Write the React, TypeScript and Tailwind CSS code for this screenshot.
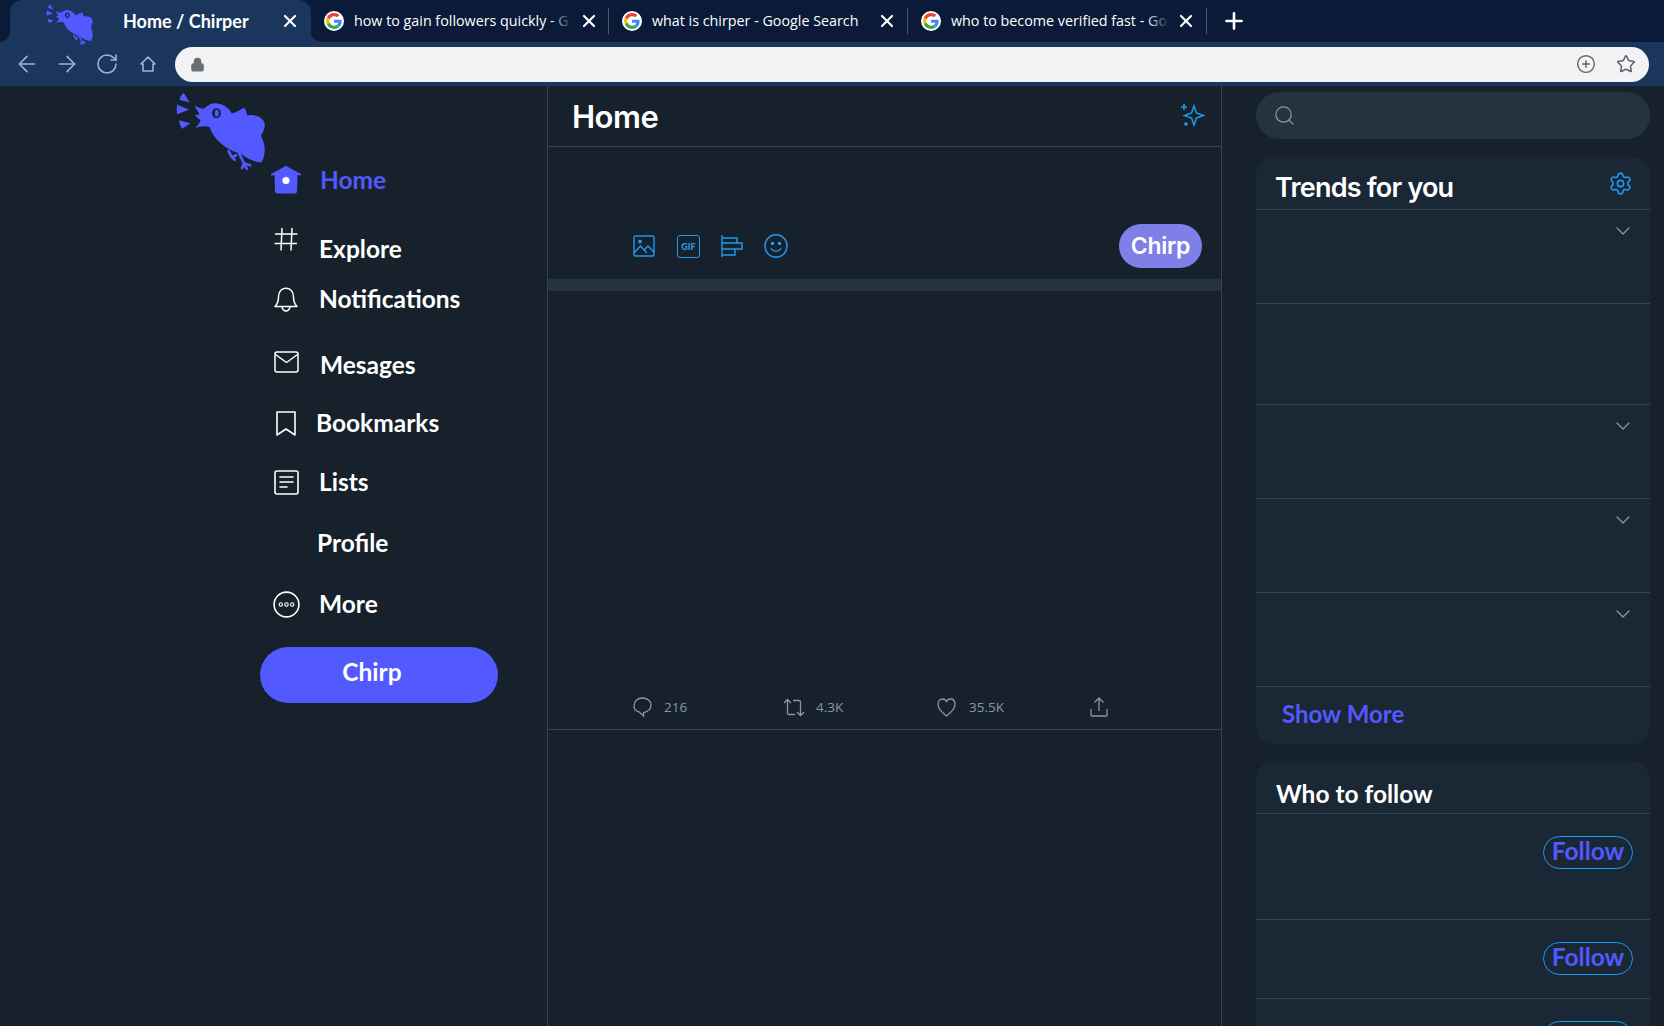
import { ArrowLeft, ArrowRight, ChevronDown, CirclePlus, Lock, Plus, RotateCw, Search, Settings, Star, X } from 'lucide-react';
import type { ReactNode } from 'react';

const navTextClass = "font-['Lato',sans-serif] font-bold text-[24.5px] leading-8 text-white whitespace-nowrap";

function BirdLogo({ className }: { className: string }) {
  return (
    <svg className={className} viewBox="48 22 270 232" fill="#5159ff">
      <path d="M70 24 L89 53 L58 45 Q60 32 70 24Z" />
      <path d="M51 59 L86 75 L51 88 Q48 73 51 59Z" />
      <path d="M57 106 L91 115 L66 131 Q57 120 57 106Z" />
      <path d="M103 62 C113 68 122 71 131 72 C142 60 155 54 170 56 C190 58 205 70 214 86 C228 82 240 74 251 68 C256 76 258 84 260 92 C280 88 298 94 307 106 C316 118 312 134 300 152 C310 170 314 190 310 210 C308 220 304 228 300 232 C280 230 258 220 240 206 C218 200 196 188 180 174 C164 160 154 144 147 126 C132 122 118 124 104 131 C112 122 118 114 121 106 C114 102 108 96 104 90 L118 90 C112 80 107 71 103 62Z" />
      <path d="M204 198 L214 216 M214 216 L226 210 M214 216 L222 224" fill="none" stroke="#5159ff" strokeWidth="8" strokeLinecap="round" />
      <path d="M236 206 L250 234 M250 234 L244 248 M250 234 L258 250 M250 234 L268 240" fill="none" stroke="#5159ff" strokeWidth="8" strokeLinecap="round" />
      <ellipse cx="168" cy="85" rx="13" ry="15" fill="#16212c" />
      <ellipse cx="169" cy="85" rx="6" ry="10" fill="#5159ff" />
    </svg>
  );
}

function GoogleG() {
  return (
    <span className="flex h-[20px] w-[20px] shrink-0 items-center justify-center rounded-full bg-white">
      <svg className="h-[16px] w-[16px]" viewBox="0 0 48 48">
        <path fill="#EA4335" d="M24 9.5c3.5 0 6.7 1.2 9.2 3.6l6.9-6.9C35.9 2.4 30.5 0 24 0 14.6 0 6.5 5.4 2.6 13.2l8 6.2C12.5 13.7 17.8 9.5 24 9.5z" />
        <path fill="#4285F4" d="M46.9 24.5c0-1.6-.1-3.1-.4-4.5H24v9h12.9c-.6 3-2.2 5.5-4.7 7.2l7.7 6c4.5-4.2 7-10.3 7-17.7z" />
        <path fill="#FBBC05" d="M10.5 28.6c-.5-1.4-.8-3-.8-4.6s.3-3.2.8-4.6l-8-6.2C.9 16.5 0 20.1 0 24s.9 7.5 2.6 10.8l7.9-6.2z" />
        <path fill="#34A853" d="M24 48c6.5 0 11.9-2.1 15.9-5.8l-7.7-6c-2.2 1.4-4.9 2.3-8.2 2.3-6.2 0-11.5-4.2-13.4-9.9l-8 6.2C6.5 42.6 14.6 48 24 48z" />
      </svg>
    </span>
  );
}

function Tab({ title, fade, widthClass }: { title: string; fade: boolean; widthClass: string }) {
  return (
    <div className={`flex h-[26px] shrink-0 items-center border-r border-[#4a5a70] pl-[13px] ${widthClass}`}>
      <GoogleG />
      <div className="relative ml-[10px] w-[218px] overflow-hidden">
        <span className="block whitespace-nowrap font-['Open_Sans',sans-serif] text-[14.3px] leading-5 text-white">{title}</span>
        {fade && <span className="absolute inset-y-0 right-0 w-[22px] bg-gradient-to-r from-transparent to-[#0a1a38]" />}
      </div>
      <X className="ml-[7px] h-[20px] w-[20px] text-white" strokeWidth={2.6} />
    </div>
  );
}

function HomeOutline() {
  return (
    <svg className="ml-[21px] h-[16px] w-[16px]" viewBox="0 0 16 16" fill="none" stroke="#a4b3c7" strokeWidth="1.6" strokeLinejoin="round">
      <path d="M1 8 L8 1 L15 8 H13 V15 H3 V8Z" />
    </svg>
  );
}

function BrowserChrome() {
  return (
    <div className="shrink-0">
      <div className="flex h-[42px] items-center bg-[#0a1a38] pl-[10px]">
        <div className="relative flex h-[42px] w-[301px] shrink-0 items-center rounded-t-[12px] bg-[#1a365d] pl-[113px]">
          <span className="absolute bottom-0 left-[-10px] h-[10px] w-[10px] bg-[#1a365d]">
            <span className="block h-full w-full rounded-br-[10px] bg-[#0a1a38]" />
          </span>
          <span className="absolute bottom-0 right-[-10px] h-[10px] w-[10px] bg-[#1a365d]">
            <span className="block h-full w-full rounded-bl-[10px] bg-[#0a1a38]" />
          </span>
          <BirdLogo className="absolute left-[35px] top-[4px] h-[41px] w-[50px]" />
          <span className="w-[157px] whitespace-nowrap font-['Lato',sans-serif] text-[18px] font-bold leading-5 text-white">Home / Chirper</span>
          <X className="h-[20px] w-[20px] text-white" strokeWidth={2.6} />
        </div>
        <div className="relative flex items-center">
          <Tab title="how to gain followers quickly - G" fade widthClass="w-[298px]" />
          <Tab title="what is chirper - Google Search" fade={false} widthClass="w-[299px]" />
          <Tab title="who to become verified fast - Go" fade widthClass="w-[299px]" />
        </div>
        <Plus className="ml-[14px] h-[26px] w-[26px] text-white" strokeWidth={2.4} />
      </div>
      <div className="flex h-[44px] items-center bg-[#1a365d] pl-[14px] pr-[15px]">
        <ArrowLeft className="h-[26px] w-[26px] text-[#a4b3c7]" strokeWidth={1.5} />
        <ArrowRight className="ml-[14px] h-[26px] w-[26px] text-[#a4b3c7]" strokeWidth={1.5} />
        <RotateCw className="ml-[15px] h-[24px] w-[24px] text-[#a4b3c7]" strokeWidth={1.6} />
        <HomeOutline />
        <div className="ml-[19px] flex h-[35px] flex-1 items-center rounded-full bg-[#f1f3f4] pl-[15px] pr-[13px]">
          <Lock className="h-[15px] w-[15px] fill-[#6b6e72] text-[#6b6e72]" />
          <CirclePlus className="ml-auto h-[20px] w-[20px] text-[#5f6368]" strokeWidth={1.7} />
          <Star className="ml-[20px] h-[20px] w-[20px] text-[#5f6368]" strokeWidth={1.8} />
        </div>
      </div>
    </div>
  );
}

function HomeIcon() {
  return (
    <svg className="h-[28px] w-[32px]" viewBox="0 0 32 28">
      <path d="M16 0 Q17 0 18 1 L31 8 Q31.5 9.5 30 9.5 L27.5 9 L27 25 Q27 27.5 24.5 27.5 L7.5 27.5 Q5 27.5 5 25 L4.5 9 L2 9.5 Q0.5 9.5 1 8 L14 1 Q15 0 16 0Z" fill="#5159ff" />
      <circle cx="16" cy="14.5" r="3.6" fill="#fff" />
    </svg>
  );
}

function HashIcon() {
  return (
    <svg className="h-[24px] w-[24px]" viewBox="0 0 24 24" fill="none" stroke="#fff" strokeWidth="1.5">
      <path d="M8 1 L7 23.5 M18 1 L17 23.5 M1 7 H23.5 M0.5 16.5 H23" />
    </svg>
  );
}

function BellIcon() {
  return (
    <svg className="h-[25px] w-[24px]" viewBox="0 0 24 25" fill="none" stroke="#fff" strokeWidth="1.5" strokeLinejoin="round">
      <path d="M12 1.2 C7 1.2 4.5 5.5 4.5 10 C4.5 15 3 17.5 1 19.5 H23 C21 17.5 19.5 15 19.5 10 C19.5 5.5 17 1.2 12 1.2Z" />
      <path d="M8 19.5 C8 22 10 24 12 24 C14 24 16 22 16 19.5" />
    </svg>
  );
}

function MailIcon() {
  return (
    <svg className="h-[22px] w-[25px]" viewBox="0 0 25 22" fill="none" stroke="#fff" strokeWidth="1.5" strokeLinejoin="round">
      <rect x="1" y="1" width="23" height="20" rx="2" />
      <path d="M1.5 3.5 L12.5 11.5 L23.5 3.5" />
    </svg>
  );
}

function BookmarkIcon() {
  return (
    <svg className="h-[25px] w-[22px]" viewBox="0 0 22 25" fill="none" stroke="#fff" strokeWidth="1.6" strokeLinejoin="round">
      <path d="M2 1 H20 V24 L11 18 L2 24Z" />
    </svg>
  );
}

function ListIcon() {
  return (
    <svg className="h-[25px] w-[25px]" viewBox="0 0 25 25" fill="none" stroke="#fff" strokeWidth="1.6" strokeLinecap="round">
      <rect x="1" y="1" width="23" height="23" rx="2" />
      <path d="M6 7h13M6 12h13M6 17h7" />
    </svg>
  );
}

function MoreIcon() {
  return (
    <svg className="h-[27px] w-[27px]" viewBox="0 0 27 27" fill="none" stroke="#fff">
      <circle cx="13.5" cy="13.5" r="12.4" strokeWidth="1.6" />
      <circle cx="7.8" cy="13.5" r="1.7" strokeWidth="1.1" />
      <circle cx="13.5" cy="13.5" r="1.7" strokeWidth="1.1" />
      <circle cx="19.2" cy="13.5" r="1.7" strokeWidth="1.1" />
    </svg>
  );
}

const navItems: { label: string; icon: ReactNode; rowClass: string; textClass: string; iconClass: string }[] = [
  { label: 'Home', icon: <HomeIcon />, rowClass: 'mt-0', textClass: 'ml-[18px] !text-[#5159ff]', iconClass: '' },
  { label: 'Explore', icon: <HashIcon />, rowClass: 'mt-[37px]', textClass: 'ml-[17px]', iconClass: 'mb-[20px]' },
  { label: 'Notifications', icon: <BellIcon />, rowClass: 'mt-[18px]', textClass: 'ml-[17px]', iconClass: '' },
  { label: 'Mesages', icon: <MailIcon />, rowClass: 'mt-[34px]', textClass: 'ml-[18px]', iconClass: 'mb-[6px]' },
  { label: 'Bookmarks', icon: <BookmarkIcon />, rowClass: 'mt-[26px]', textClass: 'ml-[14px]', iconClass: '' },
  { label: 'Lists', icon: <ListIcon />, rowClass: 'mt-[27px]', textClass: 'ml-[17px]', iconClass: '' },
  { label: 'Profile', icon: null, rowClass: 'mt-[29px]', textClass: 'ml-[15px]', iconClass: '' },
  { label: 'More', icon: <MoreIcon />, rowClass: 'mt-[29px]', textClass: 'ml-[17px]', iconClass: '' },
];

function Sidebar() {
  return (
    <aside className="w-[548px] shrink-0 border-r border-[#38444d]">
      <BirdLogo className="ml-[176px] mt-[6px] mb-[-6px] h-[78px] w-[91px]" />
      <nav className="pl-[270px]">
        {navItems.map((item) => (
          <div key={item.label} className={`flex h-[32px] items-center ${item.rowClass}`}>
            <div className={`flex h-[32px] w-[32px] shrink-0 items-center justify-center ${item.iconClass}`}>{item.icon}</div>
            <span className={`${navTextClass} ${item.textClass}`}>{item.label}</span>
          </div>
        ))}
      </nav>
      <button className="ml-[260px] mt-[27px] flex h-[56px] w-[238px] justify-center rounded-full bg-[#5159ff] pr-[14px] pt-[9px]">
        <span className={navTextClass}>Chirp</span>
      </button>
    </aside>
  );
}

function Sparkle() {
  return (
    <svg className="mb-[4px] h-[25px] w-[25px]" viewBox="0 0 25 25" fill="none" stroke="#1d9bf0" strokeWidth="1.5">
      <path d="M14 4 L16.5 11 L23.5 13.5 L16.5 16 L14 23 L11.5 16 L4.5 13.5 L11.5 11Z" />
      <path d="M4 2v6M1 5h6M6 20v4M4 22h4" strokeWidth="1.6" />
    </svg>
  );
}

function ComposeIcons() {
  return (
    <div className="ml-[85px] flex items-center text-[#1d9bf0]">
      <svg className="h-[22px] w-[22px]" viewBox="0 0 22 22" fill="none" stroke="currentColor" strokeWidth="1.4">
        <rect x="1" y="1" width="20" height="20" rx="1.5" />
        <path d="M1 18 L7.5 11 L14 18 M11 15 L15 11 L21 17" />
        <circle cx="7" cy="6.5" r="1.2" fill="currentColor" />
      </svg>
      <span className="ml-[22px] flex h-[23px] w-[23px] items-center justify-center rounded-[3px] border-[1.5px] border-[#1d9bf0] font-['Lato',sans-serif] text-[9px] font-black leading-none">GIF</span>
      <svg className="ml-[21px] h-[22px] w-[22px]" viewBox="0 0 22 22" fill="none" stroke="currentColor" strokeWidth="1.4">
        <path d="M1 0v22M1 3h15v5H1M1 8h20v6H1M1 14h13v6H1" />
      </svg>
      <svg className="ml-[21px] h-[24px] w-[24px]" viewBox="0 0 24 24" fill="none" stroke="currentColor" strokeWidth="1.4">
        <ellipse cx="12" cy="12" rx="11" ry="11.2" />
        <path d="M6.8 14.5 Q12 20 17.2 14.5" />
        <circle cx="8.5" cy="9.5" r="1.1" fill="currentColor" />
        <circle cx="15.5" cy="9.5" r="1.1" fill="currentColor" />
      </svg>
    </div>
  );
}

function TweetActions() {
  const statClass = "font-['Open_Sans',sans-serif] text-[13.5px] leading-5 text-[#8899a6]";
  return (
    <div className="flex h-[44px] items-center pl-[85px] text-[#8899a6]">
      <svg className="h-[20px] w-[19px] shrink-0" viewBox="0 0 19 20" fill="none" stroke="currentColor" strokeWidth="1.3">
        <path d="M9.5 1 C4.5 1 1 4.5 1 8.8 C1 12.8 3.8 14.6 6.3 15 L10.6 19 L10.6 15.6 C15 14.6 18 12 18 8 C18 4.2 14.5 1 9.5 1Z" />
      </svg>
      <span className={`${statClass} ml-[12px] w-[119px]`}>216</span>
      <svg className="h-[19px] w-[22px] shrink-0" viewBox="0 0 22 19" fill="none" stroke="currentColor" strokeWidth="1.3">
        <path d="M1 5 L4.5 1.5 L8 5 M4.5 2 V15 Q4.5 16.5 6 16.5 H12 M21 14 L17.5 17.5 L14 14 M17.5 17 V4 Q17.5 2.5 16 2.5 H10" />
      </svg>
      <span className={`${statClass} ml-[11px] w-[121px]`}>4.3K</span>
      <svg className="h-[19px] w-[19px] shrink-0" viewBox="0 0 19 19" fill="none" stroke="currentColor" strokeWidth="1.3">
        <path d="M9.5 18 C5 14.5 1 11 1 6.2 C1 3 3 1 5.5 1 C7.3 1 8.8 2 9.5 3.6 C10.2 2 11.7 1 13.5 1 C16 1 18 3 18 6.2 C18 11 14 14.5 9.5 18Z" />
      </svg>
      <span className={`${statClass} ml-[13px] w-[121px]`}>35.5K</span>
      <svg className="h-[20px] w-[18px] shrink-0" viewBox="0 0 18 20" fill="none" stroke="currentColor" strokeWidth="1.3">
        <path d="M9 14 V1 M4.5 5.5 L9 1 L13.5 5.5 M1 12 V18 Q1 19 2 19 H16 Q17 19 17 18 V12" />
      </svg>
    </div>
  );
}

function Feed() {
  return (
    <main className="w-[674px] shrink-0 border-r border-[#38444d]">
      <header className="flex h-[61px] items-center justify-between border-b border-[#38444d] pl-[24px] pr-[16px]">
        <h1 className="font-['Inter',sans-serif] text-[31px] font-semibold leading-none tracking-[-0.5px] text-white">Home</h1>
        <Sparkle />
      </header>
      <div className="flex h-[132px] items-end justify-between pb-[11px] pr-[19px]">
        <div className="mb-[10px]">
          <ComposeIcons />
        </div>
        <button className="flex h-[44px] w-[83px] items-center justify-center rounded-full bg-[#7f7fe8] font-['Inter',sans-serif] text-[23px] font-semibold tracking-[-0.3px] text-white">Chirp</button>
      </div>
      <div className="h-[12px] bg-[#253341]" />
      <div className="flex h-[439px] flex-col justify-end border-b border-[#38444d]">
        <TweetActions />
      </div>
    </main>
  );
}

function TrendRow({ heightClass, chevron }: { heightClass: string; chevron: boolean }) {
  return (
    <div className={`flex justify-end border-b border-[#38444d] pr-[15px] pt-[9px] ${heightClass}`}>
      {chevron && <ChevronDown className="h-[24px] w-[24px] text-[#8899a6]" strokeWidth={1.3} />}
    </div>
  );
}

function FollowRow({ heightClass, label }: { heightClass: string; label?: string }) {
  return (
    <div className={`flex items-start justify-end pr-[17px] ${heightClass} ${label ? 'border-b border-[#38444d]' : ''}`}>
      <button className="mt-[22px] flex h-[33px] w-[90px] items-center justify-center rounded-full border border-[#1d9bf0] pb-[2px] font-['Lato',sans-serif] text-[24.5px] font-bold leading-none text-[#5159ff]">{label}</button>
    </div>
  );
}

function RightColumn() {
  return (
    <section className="ml-[34px] w-[394px] shrink-0 pt-[6px]">
      <div className="flex h-[47px] items-center rounded-full bg-[#253341] pl-[17px]">
        <Search className="h-[23px] w-[23px] text-[#8899a6]" strokeWidth={1.3} />
      </div>
      <div className="mt-[18px] h-[587px] rounded-[18px] bg-[#1a2734]">
        <div className="flex h-[53px] items-start justify-between border-b border-[#38444d] pl-[19px] pr-[17px]">
          <h2 className="mt-[13px] font-['Inter',sans-serif] text-[27px] font-semibold leading-9 tracking-[-0.8px] text-white">Trends for you</h2>
          <Settings className="mt-[14px] h-[25px] w-[25px] text-[#1d9bf0]" strokeWidth={1.5} />
        </div>
        <TrendRow heightClass="h-[94px]" chevron />
        <TrendRow heightClass="h-[101px]" chevron={false} />
        <TrendRow heightClass="h-[94px]" chevron />
        <TrendRow heightClass="h-[94px]" chevron />
        <TrendRow heightClass="h-[94px]" chevron />
        <div className="flex h-[57px] items-center pb-[4px] pl-[26px]">
          <span className="font-['Lato',sans-serif] text-[24px] font-bold leading-none text-[#5159ff]">Show More</span>
        </div>
      </div>
      <div className="mt-[17px] rounded-t-[18px] bg-[#1a2734]">
        <div className="flex h-[53px] items-end border-b border-[#38444d] pb-[3px] pl-[20px]">
          <h2 className="font-['Lato',sans-serif] text-[24.5px] font-bold leading-8 text-white">Who to follow</h2>
        </div>
        <FollowRow heightClass="h-[106px]" label="Follow" />
        <FollowRow heightClass="h-[79px]" label="Follow" />
        <FollowRow heightClass="h-[60px]" />
      </div>
    </section>
  );
}

export default function App() {
  return (
    <div className="flex h-screen flex-col overflow-hidden bg-[#16212c]">
      <BrowserChrome />
      <div className="flex min-h-0 flex-1">
        <Sidebar />
        <Feed />
        <RightColumn />
      </div>
    </div>
  );
}
